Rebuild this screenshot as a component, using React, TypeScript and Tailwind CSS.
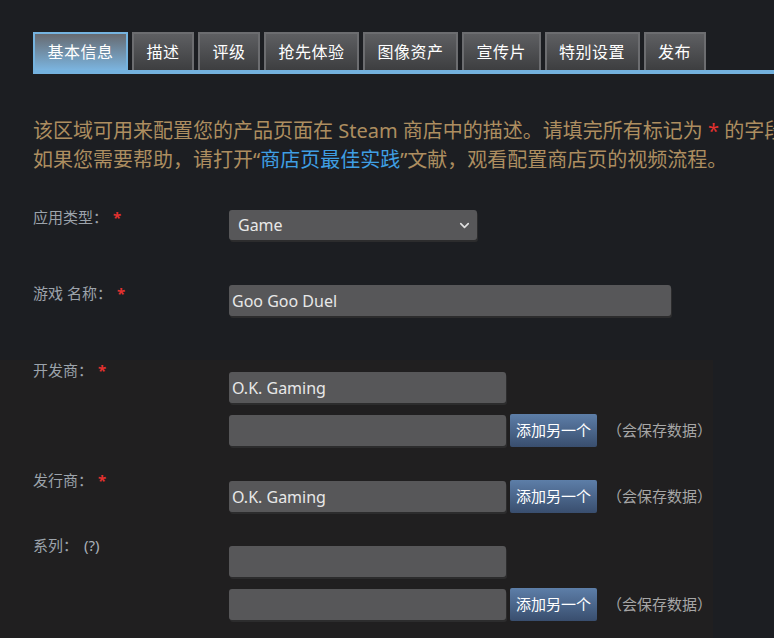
import { ChevronDown } from "lucide-react";

const tabs = ["基本信息", "描述", "评级", "抢先体验", "图像资产", "宣传片", "特别设置", "发布"];

const Star = () => <span className="ml-[5px] font-bold text-[#e2312f]">*</span>;

const TextBox = ({ value = "", width = "w-[277px]" }: { value?: string; width?: string }) => (
  <input
    readOnly
    value={value}
    className={`${width} h-[31px] rounded-[3px] bg-[#575759] px-[3px] text-[16px] text-[#e8e8e8] shadow-[1px_2px_0_#2c2c2d] outline-none`}
  />
);

const AddRow = ({ value = "" }: { value?: string }) => (
  <div className="flex items-center">
    <TextBox value={value} />
    <button className="ml-[4px] h-[33px] rounded-[2px] bg-[linear-gradient(to_bottom,#5d7ea8,#394e6e)] px-[6px] text-[15px] text-white">
      添加另一个
    </button>
    <span className="ml-[10px] text-[15px] text-[#a6a6a6]">（会保存数据）</span>
  </div>
);

const Label = ({ children }: { children: React.ReactNode }) => (
  <div className="w-[196px] shrink-0 text-[15px] leading-[20px] text-[#9ca3ab]">{children}</div>
);

export default function App() {
  return (
    <div
      className="min-h-screen w-full overflow-hidden bg-[#1c1e22]"
      style={{ fontFamily: '"Noto Sans", "Noto Sans CJK SC", sans-serif' }}
    >
      {/* tabs */}
      <div className="pt-[32px]">
        <div className="flex h-[38px] gap-1 pl-[33px]">
          {tabs.map((t, i) =>
            i === 0 ? (
              <div
                key={t}
                className="flex items-center border-2 border-b-0 border-[#75b3df] bg-[linear-gradient(to_bottom,#676a70,#7bb4df)] px-[12.5px] text-[16px] tracking-[0.5px] text-white"
              >
                {t}
              </div>
            ) : (
              <div
                key={t}
                className="flex items-center border-2 border-b-0 border-[#6c6d70] bg-[linear-gradient(to_bottom,#5e5f62,#3d3e40)] px-[12.5px] text-[16px] tracking-[0.5px] text-white"
              >
                {t}
              </div>
            )
          )}
        </div>
        <div className="ml-[33px] h-[4px] bg-[#73b1de]" />
      </div>

      {/* intro */}
      <div className="mt-[42px] whitespace-nowrap pl-[33px] text-[20px] leading-[29px] text-[#ad8e60]">
        该区域可用来配置您的产品页面在 Steam 商店中的描述。请填完所有标记为 <span className="text-[#e2312f]">*</span> 的字段。
        <br />
        如果您需要帮助，请打开“<span className="text-[#3f9fe3]">商店页最佳实践</span>”文献，观看配置商店页的视频流程。
      </div>

      {/* app type */}
      <div className="mt-[33px] flex pl-[33px]">
        <Label>
          应用类型：<Star />
        </Label>
        <div className="relative mt-[3px]">
          <select className="h-[30px] w-[248px] appearance-none rounded-[3px] bg-[#575759] pl-[9px] text-[16px] text-[#e8e8e8] shadow-[1px_2px_0_#2c2c2d] outline-none">
            <option>Game</option>
          </select>
          <ChevronDown
            size={15}
            strokeWidth={2.6}
            className="pointer-events-none absolute right-[5px] top-[8px] text-[#e0e0e0]"
          />
        </div>
      </div>

      {/* name */}
      <div className="mt-[43px] flex pl-[33px]">
        <Label>
          游戏 名称：<Star />
        </Label>
        <div className="mt-[2px]">
          <TextBox value="Goo Goo Duel" width="w-[442px]" />
        </div>
      </div>

      <div className="mt-[44px] w-[713px] bg-[#201f20] pb-[40px]">
        {/* developer */}
        <div className="flex pl-[33px]">
          <Label>
            开发商：<Star />
          </Label>
          <div className="flex flex-col">
            <div className="mt-[12px]">
              <TextBox value="O.K. Gaming" />
            </div>
            <div className="mt-[11px]">
              <AddRow />
            </div>
          </div>
        </div>

        {/* publisher */}
        <div className="mt-[23px] flex pl-[33px]">
          <Label>
            发行商：<Star />
          </Label>
          <div className="mt-[10px]">
            <AddRow value="O.K. Gaming" />
          </div>
        </div>

        {/* franchise */}
        <div className="mt-[22px] flex pl-[33px]">
          <Label>
            系列：<span className="ml-[6px] text-[15px] text-[#a9b0b8]">(?)</span>
          </Label>
          <div className="flex flex-col">
            <div className="mt-[11px]">
              <TextBox />
            </div>
            <div className="mt-[11px]">
              <AddRow />
            </div>
          </div>
        </div>
      </div>
    </div>
  );
}
